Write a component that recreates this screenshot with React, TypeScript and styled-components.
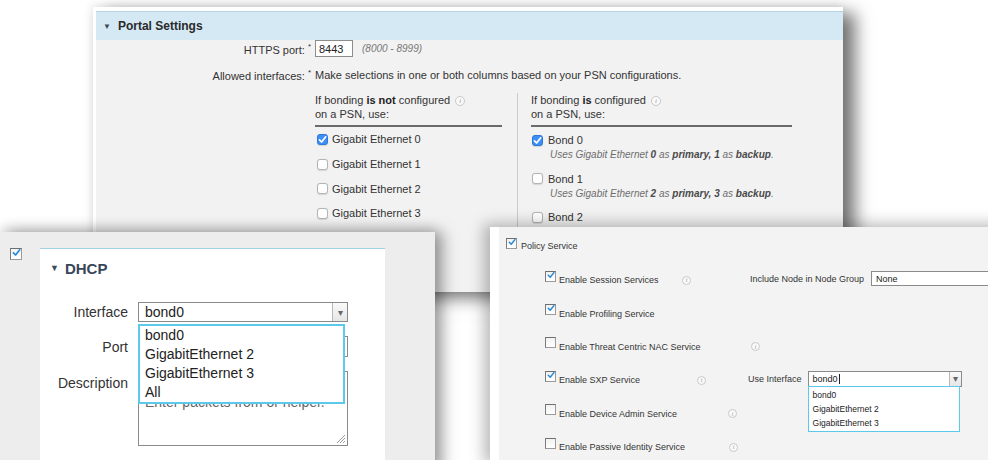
import styled, { createGlobalStyle } from "styled-components"

const GlobalStyle = createGlobalStyle`
  html, body {
    margin: 0;
    padding: 0;
    background: #fff;
  }
  body {
    font-family: "Liberation Sans", Arial, sans-serif;
    color: #333;
  }
  * {
    box-sizing: border-box;
  }
`

const Tick = ({ color = "#fff", size = 9 }: { color?: string; size?: number }) => (
  <svg width={size} height={size} viewBox="0 0 10 10">
    <path
      d="M1.6 5.4 L4 7.8 L8.6 2"
      fill="none"
      stroke={color}
      strokeWidth="1.9"
      strokeLinecap="round"
      strokeLinejoin="round"
    />
  </svg>
)

const Info = ({ size = 10 }: { size?: number }) => (
  <InfoDot $size={size}>i</InfoDot>
)

const MacCheck = ({ on }: { on?: boolean }) => (
  <MacBox $on={!!on}>{on && <Tick />}</MacBox>
)

const ClassicCheck = ({ on, size = 11 }: { on?: boolean; size?: number }) => (
  <ClassicBox $size={size}>{on && <Tick color="#2b8ad6" size={size + 1} />}</ClassicBox>
)

const ethernet = [true, false, false, false]

const bonds = [
  { name: "Bond 0", on: true, a: "0", b: "1" },
  { name: "Bond 1", on: false, a: "2", b: "3" },
  { name: "Bond 2", on: false, a: "4", b: "5" },
]

const services = [
  { label: "Enable Session Services", on: true, w: 121 },
  { label: "Enable Profiling Service", on: true, w: 0 },
  { label: "Enable Threat Centric NAC Service", on: false, w: 190 },
  { label: "Enable SXP Service", on: true, w: 136 },
  { label: "Enable Device Admin Service", on: false, w: 167 },
  { label: "Enable Passive Identity Service", on: false, w: 168 },
]

const App = () => {
  return (
    <>
      <GlobalStyle />
      <Desktop>
        <PortalWindow $x={93} $y={7} $w={750} $h={285} $z={1}>
          <PortalHeader>
            <Caret>▼</Caret>
            Portal Settings
          </PortalHeader>
          <PortalBody>
            <FieldRow>
              <FieldLabel>
                HTTPS port:<Req>*</Req>
              </FieldLabel>
              <FieldValue>
                <PortInput>8443</PortInput>
                <Hint>(8000 - 8999)</Hint>
              </FieldValue>
            </FieldRow>
            <FieldRow $top={9}>
              <FieldLabel>
                Allowed interfaces:<Req>*</Req>
              </FieldLabel>
              <FieldValue>
                Make selections in one or both columns based on your PSN configurations.
              </FieldValue>
            </FieldRow>
            <Columns>
              <Column $w={187}>
                <ColHead>
                  <span>
                    If bonding <b>is not</b> configured <Info />
                  </span>
                  <span>on a PSN, use:</span>
                </ColHead>
                {ethernet.map((on, i) => (
                  <EthItem key={i}>
                    <MacCheck on={on} />
                    Gigabit Ethernet {i}
                  </EthItem>
                ))}
              </Column>
              <Column $w={261} $divided>
                <ColHead>
                  <span>
                    If bonding <b>is</b> configured <Info />
                  </span>
                  <span>on a PSN, use:</span>
                </ColHead>
                {bonds.map((bond) => (
                  <BondItem key={bond.name}>
                    <BondMain>
                      <MacCheck on={bond.on} />
                      {bond.name}
                    </BondMain>
                    <BondNote>
                      Uses Gigabit Ethernet <b>{bond.a}</b> as <b>primary, {bond.b}</b> as{" "}
                      <b>backup</b>.
                    </BondNote>
                  </BondItem>
                ))}
              </Column>
            </Columns>
          </PortalBody>
        </PortalWindow>

        <DhcpWindow $x={0} $y={232} $w={435} $h={240} $z={2}>
          <ClassicCheck on size={12} />
          <DhcpCard>
            <DhcpTitle>
              <Caret $size={9}>▼</Caret>
              DHCP
            </DhcpTitle>
            <DhcpForm>
              <DhcpLabel>Interface</DhcpLabel>
              <SelectWrap>
                <SelectBox $h={20}>
                  <SelectText>bond0</SelectText>
                  <SelectArrow $w={15}>▾</SelectArrow>
                </SelectBox>
                <OptionList $top={22} $w={207}>
                  <OptionItem>bond0</OptionItem>
                  <OptionItem>GigabitEthernet 2</OptionItem>
                  <OptionItem>GigabitEthernet 3</OptionItem>
                  <OptionItem>All</OptionItem>
                </OptionList>
              </SelectWrap>
              <DhcpLabel>Port</DhcpLabel>
              <PlainInput />
              <DhcpLabel $top>Description</DhcpLabel>
              <TextArea>
                <span>Enter packets from or helper.</span>
                <Grip width="11" height="11" viewBox="0 0 11 11">
                  <path d="M10 2 L2 10 M10 5 L5 10 M10 8 L8 10" stroke="#9a9a9a" strokeWidth="1" />
                </Grip>
              </TextArea>
            </DhcpForm>
          </DhcpCard>
        </DhcpWindow>

        <PolicyWindow $x={490} $y={227} $w={520} $h={240} $z={2}>
          <PolicyRow>
            <ClassicCheck on />
            Policy Service
          </PolicyRow>
          <ServiceList>
            {services.map((s) => (
              <ServiceRow key={s.label}>
                <ClassicCheck on={s.on} />
                <ServiceLabel>
                  <ServiceName $w={s.w}>{s.label}</ServiceName>
                  {s.w > 0 && <Info size={9} />}
                </ServiceLabel>
                {s.label === "Enable Session Services" && (
                  <SideGroup $shift={2}>
                    Include Node in Node Group
                    <NodeInput>None</NodeInput>
                  </SideGroup>
                )}
                {s.label === "Enable SXP Service" && (
                  <SideGroup>
                    Use Interface
                    <SmallSelect>
                      <SelectBox $h={16}>
                        <SelectText $small>
                          bond0<Cursor />
                        </SelectText>
                        <SelectArrow $w={12}>▾</SelectArrow>
                      </SelectBox>
                      <OptionList $top={15} $w={152} $small>
                        <OptionItem $small>bond0</OptionItem>
                        <OptionItem $small>GigabitEthernet 2</OptionItem>
                        <OptionItem $small>GigabitEthernet 3</OptionItem>
                      </OptionList>
                    </SmallSelect>
                  </SideGroup>
                )}
              </ServiceRow>
            ))}
          </ServiceList>
        </PolicyWindow>
      </Desktop>
    </>
  )
}

const Desktop = styled.div`
  position: relative;
  width: 988px;
  height: 460px;
  overflow: hidden;
  background: #fff;
`

const Window = styled.div<{ $x: number; $y: number; $w: number; $h: number; $z: number }>`
  position: absolute;
  left: ${(p) => p.$x}px;
  top: ${(p) => p.$y}px;
  width: ${(p) => p.$w}px;
  height: ${(p) => p.$h}px;
  z-index: ${(p) => p.$z};
`

const PortalWindow = styled(Window)`
  background: #f2f2f2;
  border-top: 4px solid #fff;
  border-left: 3px solid #fff;
  box-shadow: 12px 6px 16px rgba(0, 0, 0, 0.55), -2px -2px 8px rgba(0, 0, 0, 0.08);
  font-size: 11px;
`

const PortalHeader = styled.div`
  display: flex;
  align-items: center;
  gap: 7px;
  height: 29px;
  padding-left: 7px;
  background: #d5e9f4;
  border-top: 1px solid #b6d4e3;
  font-size: 12px;
  font-weight: bold;
  color: #2a2a2a;
`

const Caret = styled.span<{ $size?: number }>`
  font-size: ${(p) => p.$size ?? 8}px;
  color: #3c4a5a;
`

const PortalBody = styled.div`
  padding-top: 0;
`

const FieldRow = styled.div<{ $top?: number }>`
  display: grid;
  grid-template-columns: 215px 1fr;
  column-gap: 4px;
  align-items: center;
  min-height: 17px;
  margin-top: ${(p) => p.$top ?? 0}px;
`

const FieldLabel = styled.div`
  text-align: right;
  color: #333;
`

const Req = styled.sup`
  font-size: 8px;
  margin-left: 3px;
`

const FieldValue = styled.div`
  display: flex;
  align-items: center;
  color: #333;
`

const PortInput = styled.div`
  width: 38px;
  height: 17px;
  padding-left: 3px;
  display: flex;
  align-items: center;
  background: #fff;
  border: 1px solid #8c8c8c;
  color: #222;
`

const Hint = styled.span`
  margin-left: 9px;
  font-style: italic;
  font-size: 10px;
  color: #777;
`

const Columns = styled.div`
  display: flex;
  gap: 15px;
  margin: 10px 0 0 219px;
`

const Column = styled.div<{ $w: number; $divided?: boolean }>`
  width: ${(p) => p.$w + (p.$divided ? 14 : 0)}px;
  ${(p) => p.$divided && "border-left: 1px solid #cbcbcb; padding-left: 13px;"}
`

const ColHead = styled.div`
  display: flex;
  flex-direction: column;
  line-height: 14px;
  padding-bottom: 4px;
  border-bottom: 2px solid #6a6a6a;
  color: #333;

  b {
    color: #222;
  }
`

const EthItem = styled.div`
  display: flex;
  align-items: center;
  gap: 4px;
  height: 24.7px;
  padding-left: 2px;
  color: #333;
`

const BondItem = styled.div`
  padding-top: 6px;
  height: 38.5px;
`

const BondMain = styled.div`
  display: flex;
  align-items: center;
  gap: 5px;
  height: 14px;
  padding-left: 1px;
  color: #333;
`

const BondNote = styled.div`
  margin-left: 19px;
  line-height: 16px;
  font-size: 10px;
  font-style: italic;
  color: #6e6e6e;

  b {
    color: #4a4a4a;
  }
`

const MacBox = styled.span<{ $on: boolean }>`
  display: inline-flex;
  align-items: center;
  justify-content: center;
  flex: none;
  width: 11px;
  height: 11px;
  border-radius: 3px;
  background: ${(p) => (p.$on ? "#3d8ef5" : "#fff")};
  border: 1px solid ${(p) => (p.$on ? "#2c78dc" : "#b4b4b4")};
  box-shadow: 0 0.5px 1px rgba(0, 0, 0, 0.12);
`

const ClassicBox = styled.span<{ $size: number }>`
  display: inline-flex;
  align-items: center;
  justify-content: center;
  flex: none;
  width: ${(p) => p.$size}px;
  height: ${(p) => p.$size}px;
  background: linear-gradient(#f2f2f2, #fff);
  border: 1px solid #9a9a9a;
  border-top-color: #6f6f6f;
  border-left-color: #7a7a7a;

  svg {
    margin-top: -3px;
    margin-left: 1px;
  }
`

const InfoDot = styled.span<{ $size: number }>`
  display: inline-flex;
  align-items: center;
  justify-content: center;
  flex: none;
  width: ${(p) => p.$size}px;
  height: ${(p) => p.$size}px;
  margin-left: 2px;
  border-radius: 50%;
  border: 1px solid #c9c9c9;
  background: #fafafa;
  font-family: "Liberation Serif", serif;
  font-style: italic;
  font-size: ${(p) => p.$size - 3}px;
  color: #999;
  vertical-align: middle;
`

const DhcpWindow = styled(Window)`
  display: flex;
  align-items: flex-start;
  gap: 18px;
  padding: 16px 0 0 10px;
  background: #ededed;
  box-shadow: 8px 0 14px rgba(0, 0, 0, 0.35), 0 -4px 12px rgba(0, 0, 0, 0.12);
`

const DhcpCard = styled.div`
  flex: none;
  width: 345px;
  height: 240px;
  padding: 10px 0 0 10px;
  background: #fff;
  border-top: 1px solid #a2d0e4;
`

const DhcpTitle = styled.div`
  display: flex;
  align-items: center;
  gap: 6px;
  height: 18px;
  font-size: 15px;
  font-weight: bold;
  color: #384659;
`

const DhcpForm = styled.div`
  display: grid;
  grid-template-columns: 78px 210px;
  column-gap: 10px;
  row-gap: 14px;
  align-items: center;
  margin-top: 25px;
  font-size: 14px;
`

const DhcpLabel = styled.div<{ $top?: boolean }>`
  text-align: right;
  color: #333;
  ${(p) => p.$top && "align-self: start; padding-top: 4px;"}
`

const SelectWrap = styled.div`
  position: relative;
  z-index: 2;
`

const SmallSelect = styled(SelectWrap)`
  width: 154px;
  margin-left: 6px;
`

const SelectBox = styled.div<{ $h: number }>`
  display: flex;
  height: ${(p) => p.$h}px;
  background: #fff;
  border: 1px solid #8a8a8a;
`

const SelectText = styled.div<{ $small?: boolean }>`
  flex: 1;
  display: flex;
  align-items: center;
  padding-left: ${(p) => (p.$small ? 4 : 6)}px;
  font-size: ${(p) => (p.$small ? 9 : 14)}px;
  color: #222;
`

const Cursor = styled.span`
  width: 1px;
  height: 10px;
  margin-left: 1px;
  background: #222;
`

const SelectArrow = styled.div<{ $w: number }>`
  display: flex;
  align-items: center;
  justify-content: center;
  width: ${(p) => p.$w}px;
  border-left: 1px solid #b8b8b8;
  background: linear-gradient(#fafafa, #e6e6e6);
  font-size: 10px;
  color: #666;
`

const OptionList = styled.div<{ $top: number; $w: number; $small?: boolean }>`
  position: absolute;
  left: 0;
  top: ${(p) => p.$top}px;
  width: ${(p) => p.$w}px;
  padding: ${(p) => (p.$small ? "1px 0" : "0")};
  background: #fff;
  border: ${(p) => (p.$small ? 1 : 2)}px solid #5cc8ec;
`

const OptionItem = styled.div<{ $small?: boolean }>`
  padding-left: ${(p) => (p.$small ? 4 : 5)}px;
  line-height: ${(p) => (p.$small ? 14 : 19)}px;
  font-size: ${(p) => (p.$small ? 8.5 : 14)}px;
  color: #222;
`

const PlainInput = styled.div`
  height: 21px;
  background: #fff;
  border: 1px solid #8a8a8a;
`

const TextArea = styled.div`
  position: relative;
  display: flex;
  flex-direction: column;
  height: 75px;
  padding: 22px 6px 4px;
  line-height: 17px;
  background: #fff;
  border: 1px solid #8a8a8a;
  color: #666;
`

const Grip = styled.svg`
  position: absolute;
  right: 1px;
  bottom: 1px;
`

const PolicyWindow = styled(Window)`
  padding: 11px 0 0 7px;
  background: #f3f3f3;
  border-left: 9px solid #fff;
  box-shadow: -6px -3px 14px rgba(0, 0, 0, 0.28);
  font-size: 9px;
  color: #333;
`

const PolicyRow = styled.div`
  display: flex;
  align-items: flex-start;
  gap: 4px;
  height: 12px;
  line-height: 17px;
`

const ServiceList = styled.div`
  margin-top: 9.5px;
  padding-left: 39px;
`

const ServiceRow = styled.div`
  display: grid;
  grid-template-columns: 11px 186px auto;
  column-gap: 3px;
  align-items: center;
  height: 33.4px;
`

const ServiceLabel = styled.div`
  display: flex;
  align-items: center;
  padding-top: 8px;
  white-space: nowrap;
`

const ServiceName = styled.span<{ $w: number }>`
  display: inline-block;
  flex: none;
  width: ${(p) => (p.$w ? `${p.$w}px` : "auto")};
`

const SideGroup = styled.div<{ $shift?: number }>`
  display: flex;
  align-items: center;
  margin-left: ${(p) => p.$shift ?? 0}px;
  padding-top: 5px;
  white-space: nowrap;
`

const NodeInput = styled.div`
  width: 130px;
  height: 15px;
  margin-left: 7px;
  padding-left: 4px;
  display: flex;
  align-items: center;
  background: #fff;
  border: 1px solid #8a8a8a;
  color: #222;
`

export default App
